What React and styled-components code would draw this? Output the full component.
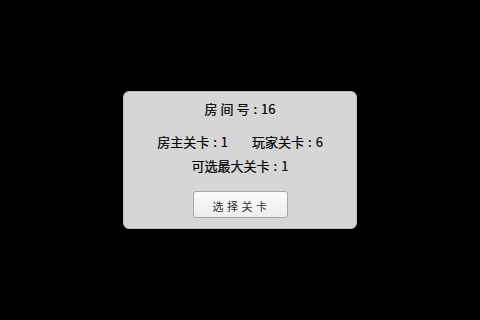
import React from 'react'
import styled, { createGlobalStyle } from 'styled-components'

const GlobalStyle = createGlobalStyle`
  html, body {
    margin: 0;
    padding: 0;
    background: #000;
  }
  body {
    font-family: "Noto Sans CJK SC", "Noto Sans", sans-serif;
  }
`

const Screen = styled.div`
  width: 480px;
  height: 320px;
  background: #000;
  display: flex;
  justify-content: center;
  align-items: flex-start;
  padding-top: 91px;
  box-sizing: border-box;
`

const Panel = styled.div`
  width: 234px;
  height: 138px;
  box-sizing: border-box;
  background: #d6d6d6;
  border: 1px solid #b8b8b8;
  border-radius: 6px;
  display: flex;
  flex-direction: column;
  align-items: center;
  padding-top: 8px;
  color: #000;
`

const Row = styled.div`
  display: flex;
  justify-content: center;
  gap: ${p => p.$gap || 0}px;
  margin-top: ${p => p.$top || 0}px;
  font-size: 13px;
  line-height: 18px;
  height: 18px;
  -webkit-text-stroke: 0.2px #000;
`

const Label = styled.span`
  white-space: pre;
  letter-spacing: ${p => p.$spread || 0}px;
`

const Colon = styled.span`
  margin-left: ${p => p.$before}px;
  margin-right: ${p => p.$after}px;
`

const Button = styled.button`
  margin-top: 16px;
  width: 95px;
  height: 27px;
  box-sizing: border-box;
  border: 1px solid #a8a8a8;
  border-radius: 3px;
  background: linear-gradient(#fbfbfb, #ededed);
  font-family: "Noto Sans CJK SC", "Noto Sans", sans-serif;
  font-size: 11px;
  letter-spacing: 3.5px;
  padding: 2px 0 0 3px;
  color: #333;
  cursor: pointer;
`

const Field = ({ label, value, spread = 0 }) => (
  <span>
    <Label $spread={spread}>{label}</Label>
    <Colon $before={Math.max(4 - spread, 1)} $after={4}>:</Colon>
    {value}
  </span>
)

const App = () => {
  return (
    <>
      <GlobalStyle />
      <Screen>
        <Panel>
          <Row>
            <Field label="房间号" value="16" spread={3} />
          </Row>
          <Row $top={15} $gap={24}>
            <Field label="房主关卡" value="1" />
            <Field label="玩家关卡" value="6" />
          </Row>
          <Row $top={6}>
            <Field label="可选最大关卡" value="1" />
          </Row>
          <Button type="button">选择关卡</Button>
        </Panel>
      </Screen>
    </>
  )
}

export default App
